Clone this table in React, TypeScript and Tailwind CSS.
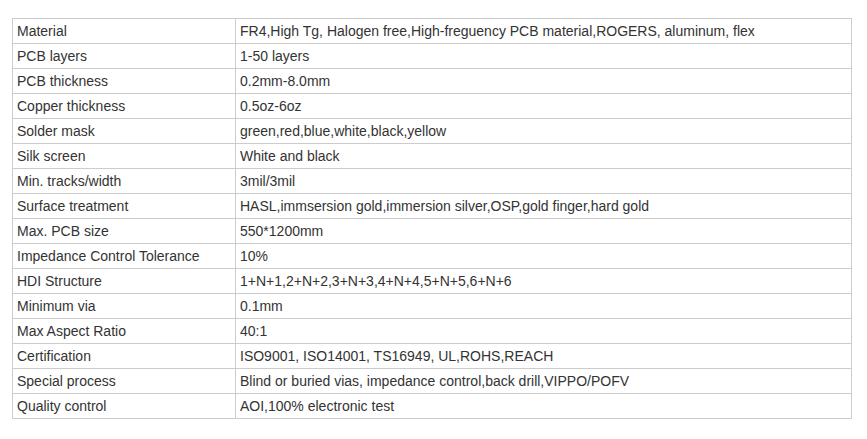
const ROWS: [string, string][] = [
  ["Material", "FR4,High Tg, Halogen free,High-freguency PCB material,ROGERS, aluminum, flex"],
  ["PCB layers", "1-50 layers"],
  ["PCB thickness", "0.2mm-8.0mm"],
  ["Copper thickness", "0.5oz-6oz"],
  ["Solder mask", "green,red,blue,white,black,yellow"],
  ["Silk screen", "White and black"],
  ["Min. tracks/width", "3mil/3mil"],
  ["Surface treatment", "HASL,immsersion gold,immersion silver,OSP,gold finger,hard gold"],
  ["Max. PCB size", "550*1200mm"],
  ["Impedance Control Tolerance", "10%"],
  ["HDI Structure", "1+N+1,2+N+2,3+N+3,4+N+4,5+N+5,6+N+6"],
  ["Minimum via", "0.1mm"],
  ["Max Aspect Ratio", "40:1"],
  ["Certification", "ISO9001, ISO14001, TS16949, UL,ROHS,REACH"],
  ["Special process", "Blind or buried vias, impedance control,back drill,VIPPO/POFV"],
  ["Quality control", "AOI,100% electronic test"],
];

export default function App() {
  return (
    <div className="min-h-[439px] w-[867px] bg-white pl-3 pt-[18px] font-['Liberation_Sans',Arial,sans-serif] text-[14px] text-[#333]">
      <table className="w-[840px] table-fixed border-collapse">
        <colgroup>
          <col className="w-[223px]" />
          <col />
        </colgroup>
        <tbody>
          {ROWS.map(([label, value]) => (
            <tr key={label} className="h-[25px]">
              <td className="border border-[#ccc] px-1 py-0 align-middle leading-[24px]">{label}</td>
              <td className="border border-[#ccc] px-1 py-0 align-middle leading-[24px]">{value}</td>
            </tr>
          ))}
        </tbody>
      </table>
    </div>
  );
}
